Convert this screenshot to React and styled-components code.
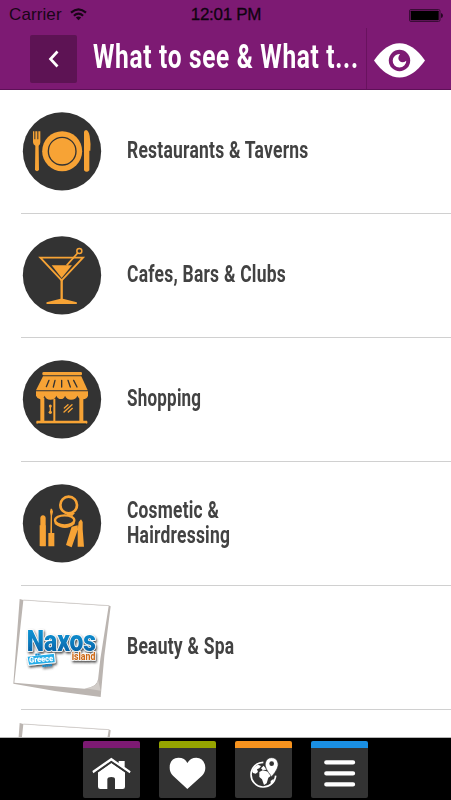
import React from 'react';
import styled, { createGlobalStyle } from 'styled-components';

const GlobalStyle = createGlobalStyle`
  * { box-sizing: border-box; }
  body { margin: 0; background: #fff; overflow: hidden; }
`;

const Screen = styled.div`
  width: 451px;
  height: 800px;
  display: flex;
  flex-direction: column;
  overflow: hidden;
  background: #fff;
  font-family: Roboto, 'Liberation Sans', sans-serif;
`;

const Header = styled.header`
  height: 90px;
  flex: none;
  background: #7d1a73;
  border-bottom: 1px solid #5d1057;
`;

const StatusBar = styled.div`
  height: 28px;
  padding: 2px 8px 0 9px;
  display: grid;
  grid-template-columns: 1fr auto 1fr;
  align-items: center;
  font: 17px/26px 'Liberation Sans', sans-serif;
  color: #190517;
`;

const Carrier = styled.div`
  display: flex;
  align-items: center;
  gap: 8px;
  letter-spacing: 0.1px;

  svg { position: relative; top: -1px; }
`;

const Clock = styled.div`
  color: #100310;
  -webkit-text-stroke: 0.3px #100310;
  letter-spacing: -0.3px;
`;

const BatteryIcon = styled.svg`
  justify-self: end;
  display: block;
`;

const NavBar = styled.div`
  height: 61px;
  display: flex;
  padding-left: 30px;
`;

const BackButton = styled.button`
  width: 47px;
  height: 48px;
  margin: 7px 16px 0 0;
  padding: 0;
  border: 0;
  border-radius: 2px;
  background: #5d1354;
  flex: none;

  svg { display: block; }
`;

const Title = styled.h1`
  width: 274px;
  flex: none;
  margin: 0;
  border-right: 1px solid #69125f;
  font-size: 34px;
  line-height: 57px;
  font-weight: 700;
  color: #fff;
  white-space: nowrap;
`;

const Condensed = styled.span`
  display: inline-block;
  transform: scaleX(${(p) => p.$scale});
  transform-origin: 0 50%;
  letter-spacing: ${(p) => p.$spacing || 0}px;
  white-space: pre;
`;

const EyeIcon = styled.svg`
  margin: 13px 0 0 6px;
  display: block;
`;

const List = styled.main`
  flex: 1;
  min-height: 0;
  overflow: hidden;
`;

const Row = styled.div`
  height: 124px;
  margin-left: 21px;
  border-bottom: 1px solid #d0d0d0;
  display: flex;
  align-items: center;
`;

const IconSlot = styled.div`
  width: 106px;
  height: 123px;
  flex: none;
  padding: ${(p) => (p.$photo ? '12px 0 0' : '21px 0 0 1px')};
  margin-left: ${(p) => (p.$photo ? '-9px' : '0')};
  margin-right: ${(p) => (p.$photo ? '9px' : '0')};

  svg { display: block; }
`;

const Label = styled.div`
  display: flex;
  flex-direction: column;
  padding-bottom: 1px;
  font-size: 23px;
  line-height: 25.5px;
  font-weight: 700;
  color: #424242;
`;

const Footer = styled.nav`
  height: 63px;
  flex: none;
  background: #000;
  border-top: 1px solid #b5b5b5;
  display: flex;
  justify-content: center;
  gap: 19px;
  padding-top: 3px;
`;

const Tab = styled.button`
  width: 57px;
  height: 57px;
  padding: 0;
  border: 0;
  border-top: 7px solid ${(p) => p.$accent};
  border-radius: 2px;
  background: #333;

  svg { display: block; }
`;

const Badge = ({ top, children }) => (
  <svg width="80" height="80" viewBox={`36 ${top} 240 240`} fill="#f7a335">
    <circle cx="156" cy={top + 121} r="117.5" fill="#333" />
    {children}
  </svg>
);

const PlateIcon = () => (
  <Badge top={33}>
    <circle cx="156.5" cy="153.5" r="60" />
    <circle cx="156.5" cy="153.5" r="41.5" fill="none" stroke="#333" strokeWidth="4" />
    <path d="M69 94h4v24h3V94h6v24h3V94h6v33q0 7-5 10l1 73q-6 7-12 0l1-73q-7-3-7-10z" />
    <path d="M222 211V96q0-5 6-6 8 2 11 18 4 24 2 44h-3v59q-8 9-16 0z" />
  </Badge>
);

const CocktailIcon = () => (
  <Badge top={30}>
    <path d="M91 98h128l-64 68z" fill="none" stroke="#f7a335" strokeWidth="5.5" />
    <path d="M125 121h61l-31 38z" />
    <path d="M170 121l33-37" stroke="#f7a335" strokeWidth="5" />
    <circle cx="208" cy="78" r="7.5" fill="none" stroke="#f7a335" strokeWidth="4.5" />
    <path d="M151.500 165h7v56l42 11v5h-91v-5l42-11z" />
  </Badge>
);

const ShopIcon = () => (
  <Badge top={27}>
    <rect x="97" y="66" width="119" height="10" rx="4" />
    <path d="M99 79h115l19 42H78z" />
    <path d="M78 124h156v13q-3 10-15 11-13 0-17-11-4 12-19 12-13 0-18-12-3 10-12 10-10 0-14-10-4 12-18 12-13 0-17-12-4 11-13 11-10-2-13-11z" />
    <path d="M91 143h12v69h27v-66h6v66h72v-69h12v69h11q3 4 0 9H80q-3-5 0-9h11z" />
    <path d="M117 91l-8 19M135 91l-5 20M155 91v20M174 91l7 20M191 91l10 20" stroke="#333" strokeWidth="4" strokeLinecap="round" />
    <path d="M121 169v17M163 174l11-10M162 186l24-22M175 186l12-11" stroke="#f7a335" strokeWidth="4" strokeLinecap="round" />
    <circle cx="121" cy="168" r="4.500" /><circle cx="121" cy="187" r="5" />
    <path d="M83 222h146" stroke="#13242d" strokeWidth="3" />
  </Badge>
);

const CosmeticsIcon = () => (
  <Badge top={24}>
    <circle cx="176" cy="90" r="25" fill="none" stroke="#f7a335" strokeWidth="8" />
    <ellipse cx="164" cy="136" rx="29" ry="15" fill="none" stroke="#f7a335" strokeWidth="7" />
    <path d="M134 138q30 26 60 0v9q-28 24-60 0zM168 114h27l-8 9-16-2z" />
    <path d="M91 214v-84q0-8 8-9 8 1 8 9v84z" />
    <path d="M89 151h18v62H89zM115 174h18v40h-18zM121 175l1-53-2-12 2-9h4l3 9-3 12v53z" />
    <path d="M185 155l18-4 1 12-19 54-17-7z" />
    <path d="M203 215v-52l3-22 7-8 5 8v22l4 52z" />
  </Badge>
);

const NaxosPhoto = ({ id }) => (
  <svg width="100" height="101" viewBox="21 24 300 303">
    <defs>
      <linearGradient id={`${id}-sea`} x1="0" y1="0" x2="0" y2="1">
        <stop offset="0" stopColor="#0a9ddd" />
        <stop offset="0.5" stopColor="#087fc1" />
        <stop offset="1" stopColor="#05539a" />
      </linearGradient>
      <filter id={`${id}-shade`} x="-20%" y="-20%" width="150%" height="150%">
        <feDropShadow dx="3" dy="5" stdDeviation="3.500" floodColor="#333" floodOpacity="0.9" />
      </filter>
    </defs>
    <path d="M44 27L55 30 313 47 317 49 298 198 287 321 150 303 25 281z" fill="#bbb5b1" />
    <path d="M55 31L311 48 286 207 279 270Q276 286 252 293L238 296 28 278z" fill="#fff" />
    <path d="M279 268l-4 13q-7 9-34 14l46 7z" fill="#d1ccc8" />
    <path d="M55 30L313 47" stroke="#c9c4c1" strokeWidth="2" />
    <g filter={`url(#${id}-shade)`} fontFamily="Roboto, sans-serif" fontWeight="900">
      <text x="65" y="182" fontSize="86" textLength="208" lengthAdjust="spacingAndGlyphs" fill={`url(#${id}-sea)`} stroke="#fff" strokeWidth="5" paintOrder="stroke" strokeLinejoin="round">Naxos</text>
      <text x="200" y="209" fontSize="31" fontWeight="800" textLength="71" lengthAdjust="spacingAndGlyphs" fill="#cd6917" stroke="#fff" strokeWidth="5" paintOrder="stroke">island</text>
      <path d="M66 199l82-9 3 28-80 8z" fill="#28aee9" stroke="#fff" strokeWidth="3" />
      <text x="73" y="218" fontSize="24" textLength="72" lengthAdjust="spacingAndGlyphs" fill="#fff" transform="rotate(-4 73 218)">Greece</text>
      <path d="M91 194l15-1M112 229l29-4" stroke="#168ac9" strokeWidth="6" strokeDasharray="5 1" />
    </g>
  </svg>
);

const categories = [
  { icon: <PlateIcon />, lines: [['Restaurants & Taverns', 0.76]] },
  { icon: <CocktailIcon />, lines: [['Cafes, Bars & Clubs', 0.76]] },
  { icon: <ShopIcon />, lines: [['Shopping', 0.74]] },
  { icon: <CosmeticsIcon />, lines: [['Cosmetic &', 0.755], ['Hairdressing', 0.76]] },
  { icon: <NaxosPhoto id="spa" />, photo: true, lines: [['Beauty & Spa', 0.76]] },
  { icon: <NaxosPhoto id="next" />, photo: true, lines: [] },
];

export default function App() {
  return (
    <Screen>
      <GlobalStyle />
      <Header>
        <StatusBar>
          <Carrier>
            Carrier
            <svg width="17" height="13" viewBox="0 0 17 13" fill="none" stroke="#190517" strokeWidth="2.200">
              <path d="M1 4.700Q8.500-1.800 16 4.700M3.900 7.700Q8.500 3.600 13.100 7.700" />
              <path d="M5.800 9.500Q8.500 7.300 11.200 9.500L8.500 12.300z" fill="#190517" stroke="none" />
            </svg>
          </Carrier>
          <Clock>12:01 PM</Clock>
          <BatteryIcon width="34" height="13" viewBox="0 0 34 13">
            <rect x="0.500" y="0.500" width="30.500" height="12" rx="1.500" fill="none" stroke="#3a0c36" />
            <rect x="1.700" y="1.700" width="28" height="9.600" rx="0.500" fill="#000" />
            <path d="M32 4q2 .5 2 2.500t-2 2.500z" fill="#260724" />
          </BatteryIcon>
        </StatusBar>
        <NavBar>
          <BackButton aria-label="Back">
            <svg width="47" height="48" viewBox="0 0 47 48">
              <path d="M27.500 16.500L20.500 24l7 7.500" fill="none" stroke="#fff" strokeWidth="2.700" />
            </svg>
          </BackButton>
          <Title><Condensed $scale={0.72} $spacing={0.95}>What to see &amp; What t...</Condensed></Title>
          <EyeIcon width="54" height="38" viewBox="0 0 54 38">
            <path d="M1 19.500Q13 2.300 26.500 2.300T52 19.500Q40 36.500 26.500 36.500T1 19.500z" fill="#fff" />
            <circle cx="26.500" cy="19.500" r="10.700" fill="#7d1a73" />
            <path d="M27 13a6.800 6.800 0 1 0 6.300 6.700q-4 3-6.700.3t.4-7z" fill="#fff" />
          </EyeIcon>
        </NavBar>
      </Header>

      <List>
        {categories.map((c, i) => (
          <Row key={i}>
            <IconSlot $photo={c.photo}>{c.icon}</IconSlot>
            <Label>
              {c.lines.map(([text, scale]) => (
                <Condensed key={text} $scale={scale} $spacing={0.3}>{text}</Condensed>
              ))}
            </Label>
          </Row>
        ))}
      </List>

      <Footer>
        <Tab $accent="#7d1a73" aria-label="Home">
          <svg width="57" height="50" viewBox="39 51 171 150" fill="#fff">
            <path d="M67 120l57-40 22 16v-6h18v18l18 13-3 6-55-38-54 38z" />
            <path d="M84 124l40-28 41 28v43q0 7-7 7h-23v-29q0-7-11-7t-12 7v29H91q-7 0-7-7z" />
            <path d="M76 127l48-34 49 34" fill="none" stroke="#333" strokeWidth="4" />
          </svg>
        </Tab>
        <Tab $accent="#96a500" aria-label="Favourites">
          <svg width="57" height="50" viewBox="267 51 171 150" fill="#fff">
            <path d="M352 174l-43-40q-10-10-10-24 0-28 26-30 20 0 27 16 9-16 27-16 25 2 27 30 0 14-10 24z" />
          </svg>
        </Tab>
        <Tab $accent="#f7931e" aria-label="Map">
          <svg width="57" height="50" viewBox="30 51 171 150" fill="#fff">
            <path d="M115 94A37 37 0 1 0 152 134" fill="none" stroke="#fff" strokeWidth="5" />
            <path d="M81 120q5-14 18-19l9 4-5 7-7 3 3 8-7 5-8-2zM103 123l10-5 17 4 8 12-8 6-5 17-8 5-6-17-8-7z" />
            <path d="M108 112l8-8 9 12-12 1zM137 150l9-7-2 13-7 5z" />
            <path d="M140 137q-23-27-19-41 4-16 19-16t19 16q4 14-19 41z" stroke="#333" strokeWidth="2" />
            <circle cx="140" cy="98" r="7" fill="#333" />
          </svg>
        </Tab>
        <Tab $accent="#1a8fe3" aria-label="Menu">
          <svg width="57" height="50" viewBox="258 51 171 150">
            <path d="M304 94h80M304 127h80M304 160h80" stroke="#fff" strokeWidth="13" strokeLinecap="round" />
          </svg>
        </Tab>
      </Footer>
    </Screen>
  );
}
